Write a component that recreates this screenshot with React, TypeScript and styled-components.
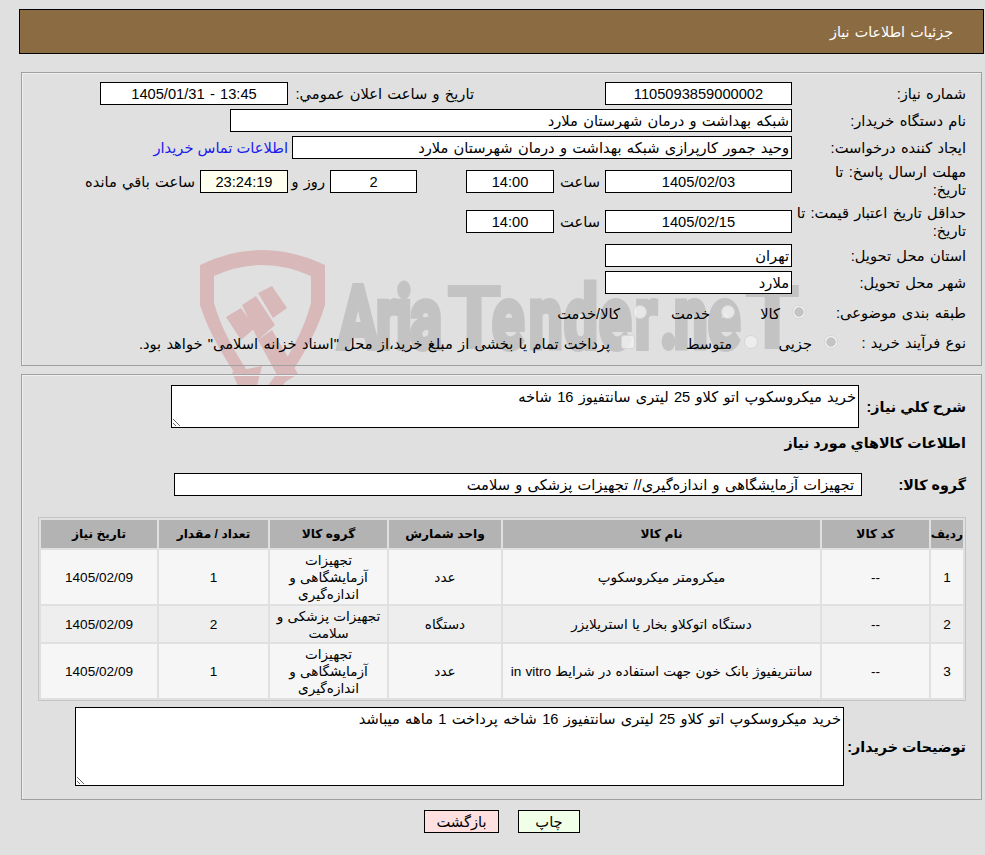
import React from 'react';
import styled, { createGlobalStyle } from 'styled-components';

const Global = createGlobalStyle`
  html, body {
    margin: 0;
    padding: 0;
    background: #e0e0e0;
  }
  body {
    font-family: "Liberation Sans", "DejaVu Sans", sans-serif;
    font-size: 14.67px;
    word-spacing: 1.2px;
    color: #000;
  }
`;

const Page = styled.div`
  position: relative;
  width: 985px;
  height: 855px;
  padding-top: 9px;
  box-sizing: border-box;
  direction: rtl;
  overflow: hidden;
`;

const Watermark = styled.svg`
  position: absolute;
  left: 195px;
  top: 245px;
  z-index: 0;
`;

const Header = styled.div`
  position: relative;
  z-index: 1;
  height: 45px;
  margin: 0 1px 0 19px;
  box-sizing: border-box;
  border: 1px solid #000;
  background: #8b6c42;
  color: #fff;
  font-size: 14.3px;
  display: flex;
  align-items: center;
  padding-right: 30px;
`;

const Panel = styled.div<{ $top: number; $height: number }>`
  position: relative;
  z-index: 1;
  margin: ${(p) => p.$top}px 3px 0 21px;
  height: ${(p) => p.$height}px;
  box-sizing: border-box;
  border: 1px solid #a0a0a0;
  box-shadow: inset 1px 1px 0 #f0f0f0;
  padding: 9px 15px 0 12px;
  display: flex;
  flex-direction: column;
`;

const Stack = styled.div`
  display: flex;
  flex-direction: column;
  gap: 4px;
`;

const Row = styled.div<{ $h?: number; $mt?: number }>`
  display: flex;
  align-items: center;
  height: ${(p) => p.$h ?? 23}px;
  margin-top: ${(p) => p.$mt ?? 0}px;
`;

const Label = styled.div<{ $w?: number }>`
  width: ${(p) => p.$w ?? 174}px;
  flex: none;
  line-height: 18px;
`;

const BoldLabel = styled.div<{ $w: number }>`
  width: ${(p) => p.$w}px;
  flex: none;
  font-weight: bold;
  font-size: 14.3px;
  word-spacing: 0;
  white-space: nowrap;
`;

const Heading = styled.div`
  font-weight: bold;
  font-size: 14.3px;
  word-spacing: 0;
  height: 24px;
  line-height: 24px;
  margin-top: 3px;
`;

const Field = styled.div<{ $w: number; $center?: boolean; $bg?: string; $pad?: number }>`
  width: ${(p) => p.$w}px;
  flex: none;
  height: 23px;
  box-sizing: border-box;
  border: 1px solid #000;
  background: ${(p) => p.$bg ?? '#fff'};
  text-align: ${(p) => (p.$center ? 'center' : 'right')};
  padding: 0 ${(p) => p.$pad ?? 2}px;
  line-height: 22px;
  white-space: nowrap;
  overflow: hidden;
`;

const Inline = styled.div<{ $mr?: number; $w?: number }>`
  flex: none;
  margin-right: ${(p) => p.$mr ?? 0}px;
  width: ${(p) => (p.$w ? `${p.$w}px` : 'auto')};
  white-space: nowrap;
`;

const ContactLink = styled.a`
  color: #1a1aee;
  margin-right: 4px;
  text-decoration: none;
  white-space: nowrap;
  word-spacing: 0;
`;

const Radio = styled.span<{ $on?: boolean; $gap: number }>`
  flex: none;
  width: 14px;
  height: 14px;
  margin-left: ${(p) => p.$gap}px;
  margin-bottom: 2px;
  border-radius: 50%;
  box-sizing: border-box;
  border: 1px solid #d6d6d6;
  background: ${(p) =>
    p.$on
      ? 'radial-gradient(circle, #c4c4c4 0 4.4px, #f2f2f2 5px)'
      : 'rgba(240,240,240,0.8)'};
`;

const Check = styled.span<{ $gap: number }>`
  flex: none;
  width: 14px;
  height: 14px;
  margin-left: ${(p) => p.$gap}px;
  margin-bottom: 2px;
  box-sizing: border-box;
  border-radius: 3px;
  border: 1px solid #d6d6d6;
  background: rgba(238,238,238,0.85);
`;

const Area = styled.textarea<{ $w: number; $h: number }>`
  display: block;
  flex: none;
  width: ${(p) => p.$w}px;
  height: ${(p) => p.$h}px;
  margin: 0;
  box-sizing: border-box;
  border: 1px solid #000;
  border-radius: 0;
  outline: none;
  background: #fff;
  padding: 2px;
  font: inherit;
  word-spacing: inherit;
  direction: rtl;
  color: #000;
`;

const GoodsTable = styled.table`
  table-layout: fixed;
  width: 928px;
  margin-top: 21px;
  border-collapse: separate;
  border-spacing: 2px;
  border: 1px solid #c4c4c4;
  flex: none;
`;

const Th = styled.th`
  height: 28px;
  padding: 0;
  background: #b3b3b3;
  font-size: 12.2px;
  font-weight: bold;
  word-spacing: 0;
`;

const Td = styled.td<{ $alt?: boolean; $h: number }>`
  height: ${(p) => p.$h}px;
  box-sizing: border-box;
  padding: 1px 2px 0;
  background: ${(p) => (p.$alt ? '#eeeeee' : '#f6f6f6')};
  text-align: center;
  font-size: 13.6px;
  word-spacing: 0.4px;
  line-height: 17px;
`;

const Buttons = styled.div`
  position: relative;
  z-index: 1;
  display: flex;
  justify-content: center;
  gap: 19px;
  margin-top: 10px;
  padding-left: 19px;
`;

const Btn = styled.button<{ $bg: string; $w: number }>`
  width: ${(p) => p.$w}px;
  height: 23px;
  padding: 0;
  border: 1px solid #000;
  background: ${(p) => p.$bg};
  font: inherit;
  color: #000;
`;

const columns = [32, 107, 317, 112, 117, 109, 116];
const headers = ['رديف', 'کد کالا', 'نام کالا', 'واحد شمارش', 'گروه کالا', 'تعداد / مقدار', 'تاريخ نياز'];
const rows = [
  { n: '1', name: 'میکرومتر میکروسکوپ', unit: 'عدد', group: 'تجهیزات آزمایشگاهی و اندازه‌گیری', qty: '1', h: 54 },
  { n: '2', name: 'دستگاه اتوکلاو بخار یا استریلایزر', unit: 'دستگاه', group: 'تجهیزات پزشکی و سلامت', qty: '2', h: 36 },
  { n: '3', name: 'سانتریفیوژ بانک خون جهت استفاده در شرایط in vitro', unit: 'عدد', group: 'تجهیزات آزمایشگاهی و اندازه‌گیری', qty: '1', h: 54 },
];

// watermark pieces: page x of each letter, squeezed horizontally by scale
const markParts = [
  { text: 'Aria', scale: 0.68, xs: [338, 376, 396, 410] },
  { text: 'T', scale: 1, xs: [447] },
  { text: 'ender.ne', scale: 0.68, xs: [492, 529, 564, 599, 635, 660, 674, 708] },
  { text: 'T', scale: 1, xs: [745] },
];

const App = () => {
  return (
    <Page>
      <Global />
      <Watermark width="620" height="170" viewBox="195 245 620 170">
        <path
          fill="#d9b8ba"
          fillRule="evenodd"
          d="M200 265 Q262 235 325 265 L325 305 Q312 350 263 412 Q214 350 200 305 Z M214 276 L214 303 Q226 345 263 392 Q300 345 311 303 L311 276 Q262 254 214 276 Z"
        />
        <path fill="#d9b8ba" d="M226 317 L241 308 L255 328 L241 340 Z M242 305 L256 296 L275 325 L258 340 Z M258 293 L272 286 L287 308 L273 318 Z" />
        <path fill="#d9b8ba" d="M258 340 L272 330 L298 374 L282 384 Z M232 372 L262 366 L257 386 L238 386 Z" />
        {markParts.map((part, i) => (
          <text
            key={i}
            transform={`scale(${part.scale} 1)`}
            x={part.xs.map((v) => v / part.scale).join(' ')}
            y="348"
            fontFamily="Roboto, sans-serif"
            fontWeight="700"
            fontSize="88"
            fill="#c3c3c3"
            stroke="#c3c3c3"
            strokeWidth={part.scale === 1 ? 2 : 6}
            direction="ltr"
          >
            {part.text}
          </text>
        ))}
      </Watermark>

      <Header>جزئیات اطلاعات نیاز</Header>

      <Panel $top={18} $height={294}>
        <Stack>
          <Row>
            <Label>شماره نیاز:</Label>
            <Field $w={187} $center>1105093859000002</Field>
            <Inline $mr={131} $w={186}>تاریخ و ساعت اعلان عمومي:</Inline>
            <Field $w={188} $center>13:45 - 1405/01/31</Field>
          </Row>
          <Row>
            <Label>نام دستگاه خریدار:</Label>
            <Field $w={562}>شبکه بهداشت و درمان شهرستان ملارد</Field>
          </Row>
          <Row>
            <Label>ایجاد کننده درخواست:</Label>
            <Field $w={500}>وحید جمور کارپرازی شبکه بهداشت و درمان شهرستان ملارد</Field>
            <ContactLink href="#">اطلاعات تماس خریدار</ContactLink>
          </Row>
          <Row $h={36}>
            <Label>مهلت ارسال پاسخ: تا<br />تاریخ:</Label>
            <Field $w={187} $center>1405/02/03</Field>
            <Inline $mr={5} $w={46}>ساعت</Inline>
            <Field $w={88} $center>14:00</Field>
            <Inline $w={49} />
            <Field $w={87} $center>2</Field>
            <Inline $mr={5} $w={37}>روز و</Inline>
            <Field $w={88} $center $bg="#fffff0">23:24:19</Field>
            <Inline $mr={5}>ساعت باقي مانده</Inline>
          </Row>
          <Row $h={37}>
            <Label>حداقل تاریخ اعتبار قیمت: تا<br />تاریخ:</Label>
            <Field $w={187} $center>1405/02/15</Field>
            <Inline $mr={5} $w={46}>ساعت</Inline>
            <Field $w={88} $center>14:00</Field>
          </Row>
          <Row>
            <Label>استان محل تحویل:</Label>
            <Field $w={187}>تهران</Field>
          </Row>
          <Row>
            <Label>شهر محل تحویل:</Label>
            <Field $w={187}>ملارد</Field>
          </Row>
          <Row $h={30}>
            <Label $w={160}>طبقه بندی موضوعی:</Label>
            <Radio $on $gap={12} />
            <Inline $w={45}>کالا</Inline>
            <Radio $gap={11} />
            <Inline $w={63}>خدمت</Inline>
            <Radio $gap={13} />
            <Inline>کالا/خدمت</Inline>
          </Row>
          <Row $h={22}>
            <Label $w={128}>نوع فرآیند خرید :</Label>
            <Radio $on $gap={12} />
            <Inline $w={54}>جزیی</Inline>
            <Radio $gap={12} />
            <Inline $w={97}>متوسط</Inline>
            <Check $gap={11} />
            <Inline>پرداخت تمام یا بخشی از مبلغ خرید،از محل "اسناد خزانه اسلامی" خواهد بود.</Inline>
          </Row>
        </Stack>
      </Panel>

      <Panel $top={8} $height={426}>
        <Row $h={43} $mt={1}>
          <BoldLabel $w={107}>شرح کلي نیاز:</BoldLabel>
          <Area $w={688} $h={43} readOnly value="خرید میکروسکوپ اتو کلاو 25 لیتری سانتفیوز 16 شاخه" />
        </Row>
        <Heading>اطلاعات کالاهاي مورد نیاز</Heading>
        <Row $mt={18}>
          <BoldLabel $w={104}>گروه کالا:</BoldLabel>
          <Field $w={688} $pad={7}>تجهیزات آزمایشگاهی و اندازه‌گیری// تجهیزات پزشکی و سلامت</Field>
        </Row>
        <GoodsTable>
          <colgroup>
            {columns.map((w, i) => (
              <col key={i} width={w} />
            ))}
          </colgroup>
          <thead>
            <tr>
              {headers.map((h) => (
                <Th key={h}>{h}</Th>
              ))}
            </tr>
          </thead>
          <tbody>
            {rows.map((r, i) => (
              <tr key={r.n}>
                <Td $h={r.h} $alt={i === 1}>{r.n}</Td>
                <Td $h={r.h} $alt={i === 1}>--</Td>
                <Td $h={r.h} $alt={i === 1}>{r.name}</Td>
                <Td $h={r.h} $alt={i === 1}>{r.unit}</Td>
                <Td $h={r.h} $alt={i === 1}>{r.group}</Td>
                <Td $h={r.h} $alt={i === 1}>{r.qty}</Td>
                <Td $h={r.h} $alt={i === 1}>1405/02/09</Td>
              </tr>
            ))}
          </tbody>
        </GoodsTable>
        <Row $h={79} $mt={6}>
          <BoldLabel $w={122}>توضیحات خریدار:</BoldLabel>
          <Area $w={769} $h={79} readOnly value="خرید میکروسکوپ اتو کلاو 25 لیتری سانتفیوز 16 شاخه پرداخت 1 ماهه میباشد" />
        </Row>
      </Panel>

      <Buttons>
        <Btn $bg="#efffe8" $w={62}>چاپ</Btn>
        <Btn $bg="#ffe0e0" $w={75}>بازگشت</Btn>
      </Buttons>
    </Page>
  );
};

export default App;
